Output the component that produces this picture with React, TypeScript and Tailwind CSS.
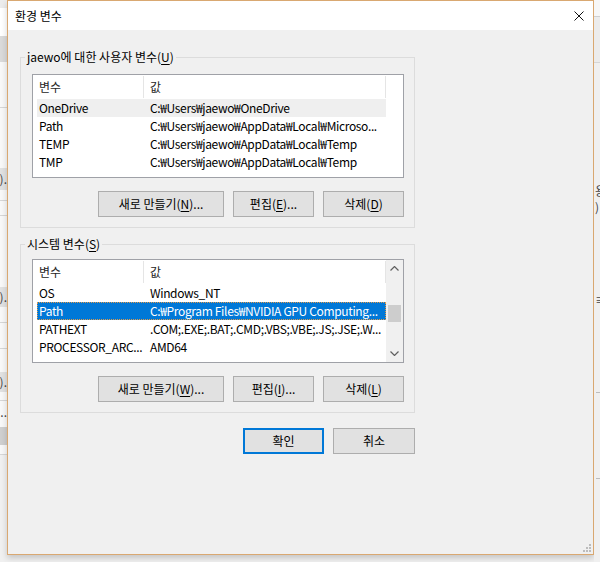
import React from "react";

function U({ c }: { c: string }) {
  return <span className="underline decoration-1 underline-offset-[2px]">{c}</span>;
}

function Btn({ className, children }: { className: string; children: React.ReactNode }) {
  return (
    <div className={"h-[26px] flex items-center justify-center bg-[#e1e1e1] " + className}>
      <span className="leading-none whitespace-nowrap">{children}</span>
    </div>
  );
}

function Chevron({ up }: { up?: boolean }) {
  return (
    <svg width="9" height="5" viewBox="0 0 9 5">
      <polyline
        points={up ? "0.5,4.5 4.5,0.5 8.5,4.5" : "0.5,0.5 4.5,4.5 8.5,0.5"}
        fill="none"
        stroke="#606060"
        strokeWidth="1.2"
      />
    </svg>
  );
}

type Row = { name: string; value: string };

function ListBox({
  rows,
  selected,
  focused,
  scroll,
}: {
  rows: Row[];
  selected: number;
  focused: boolean;
  scroll: boolean;
}) {
  return (
    <div className="w-[372px] h-[104px] border border-[#9fa1a7] bg-white flex overflow-hidden">
      <div className="w-[353px] flex flex-col overflow-hidden">
        <div className="h-[24px] flex shrink-0 items-center">
          <div className="w-[110px] h-full flex items-center pl-[6px] text-[#262626]">변수</div>
          <div className="w-[1px] h-[22px] bg-[#e5e5e5]" />
          <div className="w-[241px] h-full flex items-center pl-[6px] text-[#262626]">값</div>
          <div className="w-[1px] h-[22px] bg-[#e5e5e5]" />
        </div>
        {rows.map((r, i) => {
          const sel = i === selected;
          const cls = sel
            ? focused
              ? "bg-[#0078d7] text-white outline-1 outline-dotted outline-[#e09a4a] -outline-offset-1"
              : "bg-[#efefef]"
            : "";
          const partial = i === 4 ? "pt-[5px]" : "";
          return (
            <div
              key={i}
              className={
                "ml-[4px] w-[349px] h-[18px] flex items-center shrink-0 tracking-[-0.35px] " + cls + " " + partial
              }
            >
              <div className="w-[106px] pl-[2px] whitespace-nowrap overflow-hidden">{r.name}</div>
              <div className="flex-1 pl-[7px] whitespace-nowrap overflow-hidden">{r.value}</div>
            </div>
          );
        })}
      </div>
      {scroll ? (
        <div className="w-[17px] h-full flex flex-col bg-[#f0f0f0]">
          <div className="h-[17px] flex items-center justify-center">
            <Chevron up />
          </div>
          <div className="flex-1 flex flex-col items-center">
            <div className="mt-[28px] w-[13px] h-[17px] bg-[#cdcdcd]" />
          </div>
          <div className="h-[17px] flex items-center justify-center">
            <Chevron />
          </div>
        </div>
      ) : (
        <div className="w-[17px] h-full" />
      )}
    </div>
  );
}

function Group({
  label,
  rows,
  selected,
  focused,
  scroll,
  buttons,
  mt,
  pt,
}: {
  label: React.ReactNode;
  rows: Row[];
  selected: number;
  focused: boolean;
  scroll: boolean;
  buttons: [React.ReactNode, React.ReactNode, React.ReactNode];
  mt: string;
  pt: string;
}) {
  return (
    <fieldset className={"ml-[12px] w-[395px] border border-[#dcdcdc] p-0 " + mt}>
      <legend className="ml-[4px] px-[2px] leading-[16px] whitespace-nowrap">{label}</legend>
      <div className={"pl-[11px] pb-[10px] flex flex-col " + pt}>
        <ListBox rows={rows} selected={selected} focused={focused} scroll={scroll} />
        <div className="mt-[13px] w-[372px] flex justify-end gap-[9px]">
          <Btn className="w-[126px] border border-[#adadad]">{buttons[0]}</Btn>
          <Btn className="w-[81px] border border-[#adadad]">{buttons[1]}</Btn>
          <Btn className="w-[81px] border border-[#adadad]">{buttons[2]}</Btn>
        </div>
      </div>
    </fieldset>
  );
}

function LeftStrip() {
  return (
    <div className="w-[7px] h-full flex flex-col overflow-hidden bg-[#f8f8f8] text-[#444]">
      <div className="h-[8px] bg-[#ececec]" />
      <div className="h-[28px] bg-white" />
      <div className="h-[26px] bg-[#dadada]" />
      <div className="h-[45px]" />
      <div className="h-[1px] bg-[#d6d6d6]" />
      <div className="h-[60px]" />
      <div className="h-[22px] bg-[#e1e1e1] flex items-center justify-end leading-none">).</div>
      <div className="h-[10px]" />
      <div className="h-[1px] bg-[#d6d6d6]" />
      <div className="h-[14px]" />
      <div className="h-[1px] bg-[#d6d6d6]" />
      <div className="h-[71px]" />
      <div className="h-[20px] bg-[#e1e1e1] flex items-center justify-end leading-none">).</div>
      <div className="h-[15px]" />
      <div className="h-[1px] bg-[#d6d6d6]" />
      <div className="h-[25px]" />
      <div className="h-[1px] bg-[#d6d6d6]" />
      <div className="h-[23px]" />
      <div className="h-[20px] bg-[#e1e1e1] flex items-center justify-end leading-none">).</div>
      <div className="h-[8px]" />
      <div className="h-[1px] bg-[#d6d6d6]" />
      <div className="h-[4px]" />
      <div className="h-[14px] flex items-center justify-end leading-none">..</div>
      <div className="h-[8px]" />
      <div className="h-[18px] bg-[#cfcfcf]" />
      <div className="h-[9px]" />
      <div className="h-[1px] bg-[#d6d6d6]" />
      <div className="flex-1 bg-[#f0f0f0]" />
    </div>
  );
}

function RightStrip() {
  return (
    <div className="w-[6px] h-full flex flex-col overflow-hidden bg-[#f0f0f0] text-[#444]">
      <div className="h-[16px] bg-[#f7f7f7]" />
      <div className="h-[1px] bg-[#d0d0d0]" />
      <div className="h-[45px] bg-[#ececec]" />
      <div className="h-[1px] bg-[#d6d6d6]" />
      <div className="h-[120px]" />
      <div className="h-[16px] leading-[16px] whitespace-nowrap pl-[1px]">용</div>
      <div className="h-[16px] leading-[16px] whitespace-nowrap pl-[1px]">)</div>
      <div className="h-[78px]" />
      <div className="h-[14px] leading-[14px] whitespace-nowrap pl-[1px]">≡</div>
      <div className="h-[85px]" />
      <div className="h-[1px] w-[4px] ml-[2px] bg-[#bdbdbd]" />
      <div className="h-[85px]" />
      <div className="h-[1px] w-[4px] ml-[2px] bg-[#bdbdbd]" />
      <div className="flex-1" />
    </div>
  );
}

export default function App() {
  const userRows: Row[] = [
    { name: "OneDrive", value: "C:₩Users₩jaewo₩OneDrive" },
    { name: "Path", value: "C:₩Users₩jaewo₩AppData₩Local₩Microso..." },
    { name: "TEMP", value: "C:₩Users₩jaewo₩AppData₩Local₩Temp" },
    { name: "TMP", value: "C:₩Users₩jaewo₩AppData₩Local₩Temp" },
  ];
  const sysRows: Row[] = [
    { name: "OS", value: "Windows_NT" },
    { name: "Path", value: "C:₩Program Files₩NVIDIA GPU Computing..." },
    { name: "PATHEXT", value: ".COM;.EXE;.BAT;.CMD;.VBS;.VBE;.JS;.JSE;.W..." },
    { name: "PROCESSOR_ARC...", value: "AMD64" },
    { name: "", value: "Intel64 Family 6 Model 60 Stepping 3, G..." },
  ];

  return (
    <div className="w-[600px] h-[562px] flex overflow-hidden bg-[#f0f0f0] text-[12px] text-black font-['Noto_Sans_CJK_KR','Noto_Sans',sans-serif]">
      <LeftStrip />
      <div className="w-[587px] h-full flex flex-col">
        <div className="h-[555px] border border-[#d9a871] bg-[#f0f0f0] flex flex-col shadow-[0_3px_6px_rgba(0,0,0,0.18)]">
          <div className="h-[29px] bg-white flex items-center justify-between pl-[7px] pr-[9px] shrink-0">
            <span>환경 변수</span>
            <svg width="10" height="10" viewBox="0 0 10 10">
              <line x1="0.5" y1="0.5" x2="9.5" y2="9.5" stroke="#111" strokeWidth="1" />
              <line x1="9.5" y1="0.5" x2="0.5" y2="9.5" stroke="#111" strokeWidth="1" />
            </svg>
          </div>
          <div className="flex-1 flex flex-col">
            <Group
              mt="mt-[19px]"
              pt="pt-[9px]"
              label={
                <>
                  jaewo에 대한 사용자 변수(<U c="U" />)
                </>
              }
              rows={userRows}
              selected={0}
              focused={false}
              scroll={false}
              buttons={[
                <>
                  새로 만들기(<U c="N" />)...
                </>,
                <>
                  편집(<U c="E" />)...
                </>,
                <>
                  삭제(<U c="D" />)
                </>,
              ]}
            />
            <Group
              mt="mt-[8px]"
              pt="pt-[7px]"
              label={
                <>
                  시스템 변수(<U c="S" />)
                </>
              }
              rows={sysRows}
              selected={1}
              focused={true}
              scroll={true}
              buttons={[
                <>
                  새로 만들기(<U c="W" />)...
                </>,
                <>
                  편집(<U c="I" />)...
                </>,
                <>
                  삭제(<U c="L" />)
                </>,
              ]}
            />
            <div className="ml-[12px] w-[395px] mt-[15px] flex justify-end gap-[9px]">
              <Btn className="w-[81px] border-2 border-[#0078d7]">확인</Btn>
              <Btn className="w-[82px] border border-[#adadad]">취소</Btn>
            </div>
            <div className="flex-1" />
            <div className="flex justify-end pr-[2px] pb-[2px]">
              <svg width="8" height="8" viewBox="0 0 8 8">
                <rect x="6" y="0" width="2" height="2" fill="#bcbcbc" />
                <rect x="3" y="3" width="2" height="2" fill="#bcbcbc" />
                <rect x="6" y="3" width="2" height="2" fill="#bcbcbc" />
                <rect x="0" y="6" width="2" height="2" fill="#bcbcbc" />
                <rect x="3" y="6" width="2" height="2" fill="#bcbcbc" />
                <rect x="6" y="6" width="2" height="2" fill="#bcbcbc" />
              </svg>
            </div>
          </div>
        </div>
        <div className="flex-1" />
      </div>
      <RightStrip />
    </div>
  );
}
